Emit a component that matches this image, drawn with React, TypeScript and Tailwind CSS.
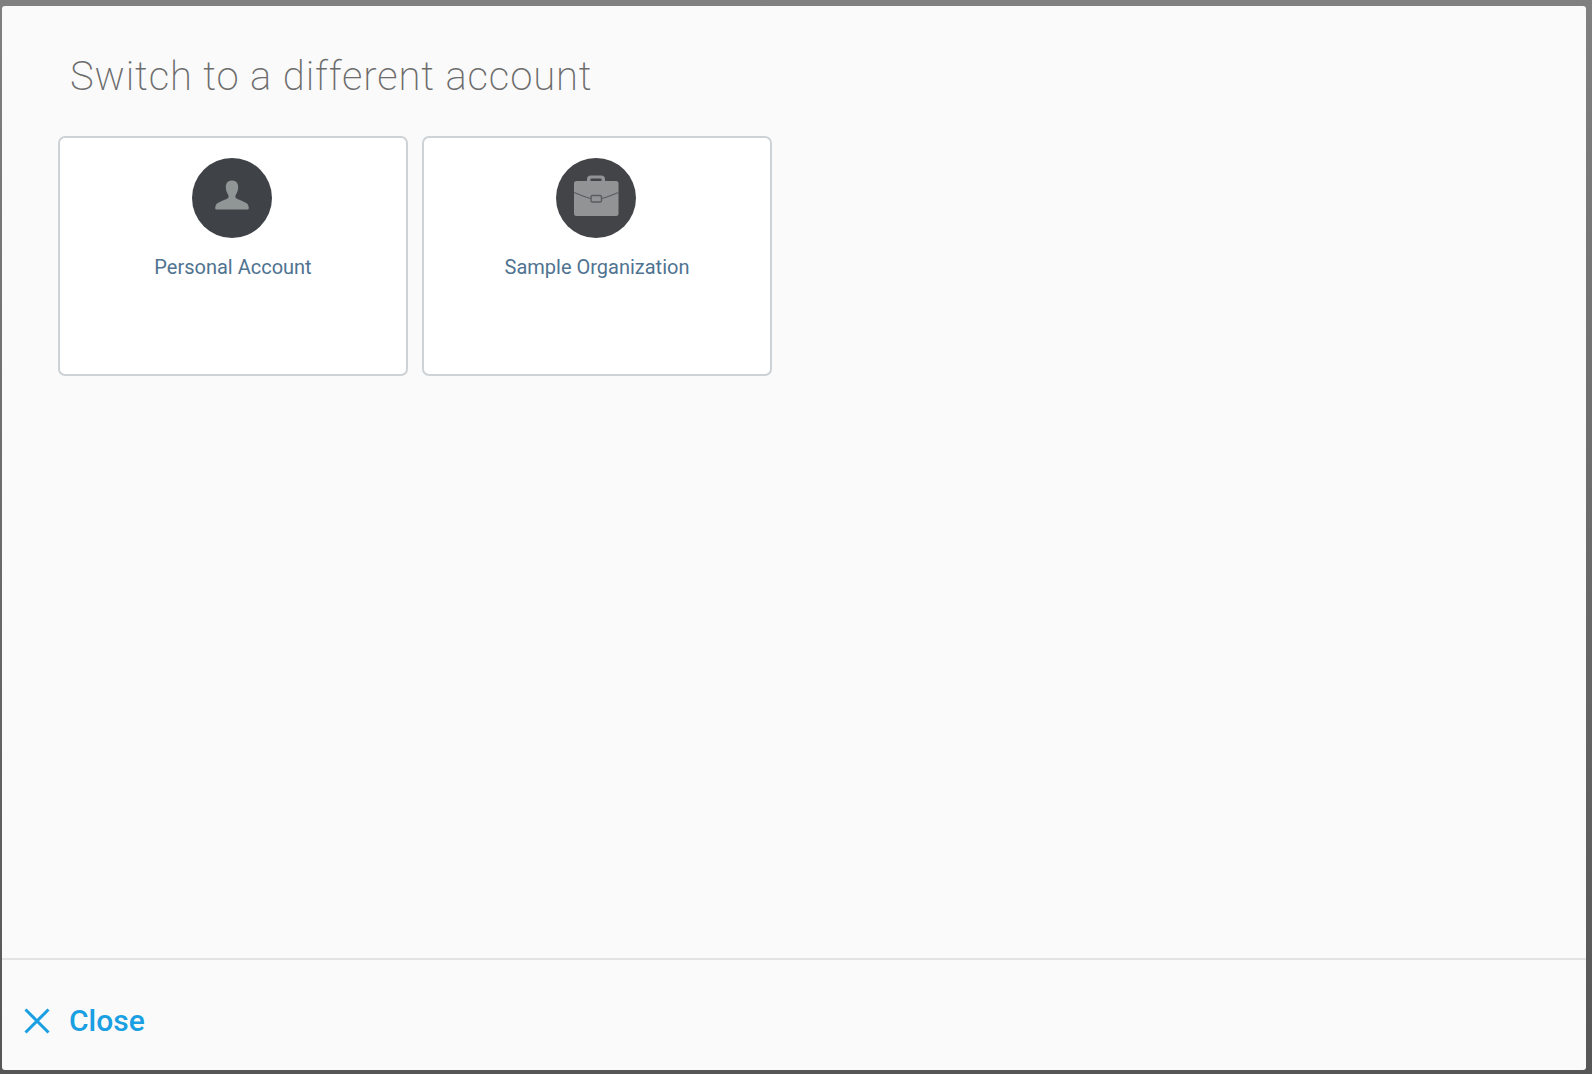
const accounts = [
  { name: "Personal Account", kind: "person" },
  { name: "Sample Organization", kind: "org" },
];

function PersonIcon() {
  return (
    <svg width="80" height="80" viewBox="0 0 80 80" className="mr-[2px]">
      <circle cx="40" cy="40" r="40" fill="#3f4347" />
      <path
        d="M40 22.500c-4 0-6.200 2.800-6.200 6.500 0 3 1 5.800 2.300 7.700 .8 1.200 .7 3-.5 3.800-2.500 1.500-6.800 2.500-9.800 4.500-1.600 1-2.500 2.700-2.500 4.500v1c0 .6 .5 1 1 1h31.400c.6 0 1-.4 1-1v-1c0-1.800-.9-3.500-2.500-4.500-3-2-7.300-3-9.800-4.500-1.200-.8-1.300-2.600-.5-3.800 1.300-1.900 2.300-4.700 2.300-7.700 0-3.700-2.200-6.500-6.200-6.500z"
        fill="#909596"
      />
    </svg>
  );
}

function BriefcaseIcon() {
  return (
    <svg width="80" height="80" viewBox="0 0 80 80" className="mr-[2px]">
      <circle cx="40" cy="40" r="40" fill="#434447" />
      <path
        d="M31 23.500v-2.500c0-2 1.500-3.500 3.500-3.500h11c2 0 3.500 1.500 3.500 3.500v2.500h-3.500v-2c0-.6-.4-1-1-1h-9c-.6 0-1 .4-1 1v2z"
        fill="#929395"
      />
      <rect x="18" y="23" width="44.500" height="35" rx="2.500" fill="#929395" />
      <path d="M18 34.500c6 2 11 5 17 6M45.500 40.500c6-1 11-4 17-6" fill="none" stroke="#5a5b5f" strokeWidth="1.200" />
      <rect x="35" y="37.500" width="10.500" height="6.500" rx="1.500" fill="#929395" stroke="#5a5b5f" strokeWidth="1.400" />
    </svg>
  );
}

export default function App() {
  return (
    <div className="h-[1074px] w-full bg-gradient-to-b from-[#808080] to-[#565656] pt-[6px] pr-[6px] pb-[4px] pl-[2px] font-['Roboto',sans-serif]">
      <div className="flex h-full flex-col rounded-[3px] bg-[#fafafa]">
        <div className="flex-1 pl-[56px]">
          <h1 className="mt-[47px] ml-[12px] text-[40px] leading-[47px] font-[200] tracking-[0.88px] text-[#6c6c6c]">
            Switch to a different account
          </h1>
          <div className="mt-[36px] flex gap-[14px]">
            {accounts.map((account) => (
              <div
                key={account.name}
                className="flex h-[240px] w-[350px] flex-col items-center rounded-[7px] border-2 border-[#cdd2d6] bg-white pt-[20px]"
              >
                {account.kind === "person" ? <PersonIcon /> : <BriefcaseIcon />}
                <p className="mt-[17px] text-[20px] leading-[24px] text-[#4f7391]">{account.name}</p>
              </div>
            ))}
          </div>
        </div>
        <div className="flex h-[112px] items-center gap-[19px] border-t-2 border-[#e2e3e5] pt-[11px] pl-[22px] text-[#1a9fe3]">
          <svg width="26" height="26" viewBox="0 0 26 26" fill="none" stroke="currentColor" strokeWidth="3">
            <path d="M1.500 1.500l23 23M24.500 1.500l-23 23" />
          </svg>
          <span className="text-[30px] leading-[36px] font-medium">Close</span>
        </div>
      </div>
    </div>
  );
}
